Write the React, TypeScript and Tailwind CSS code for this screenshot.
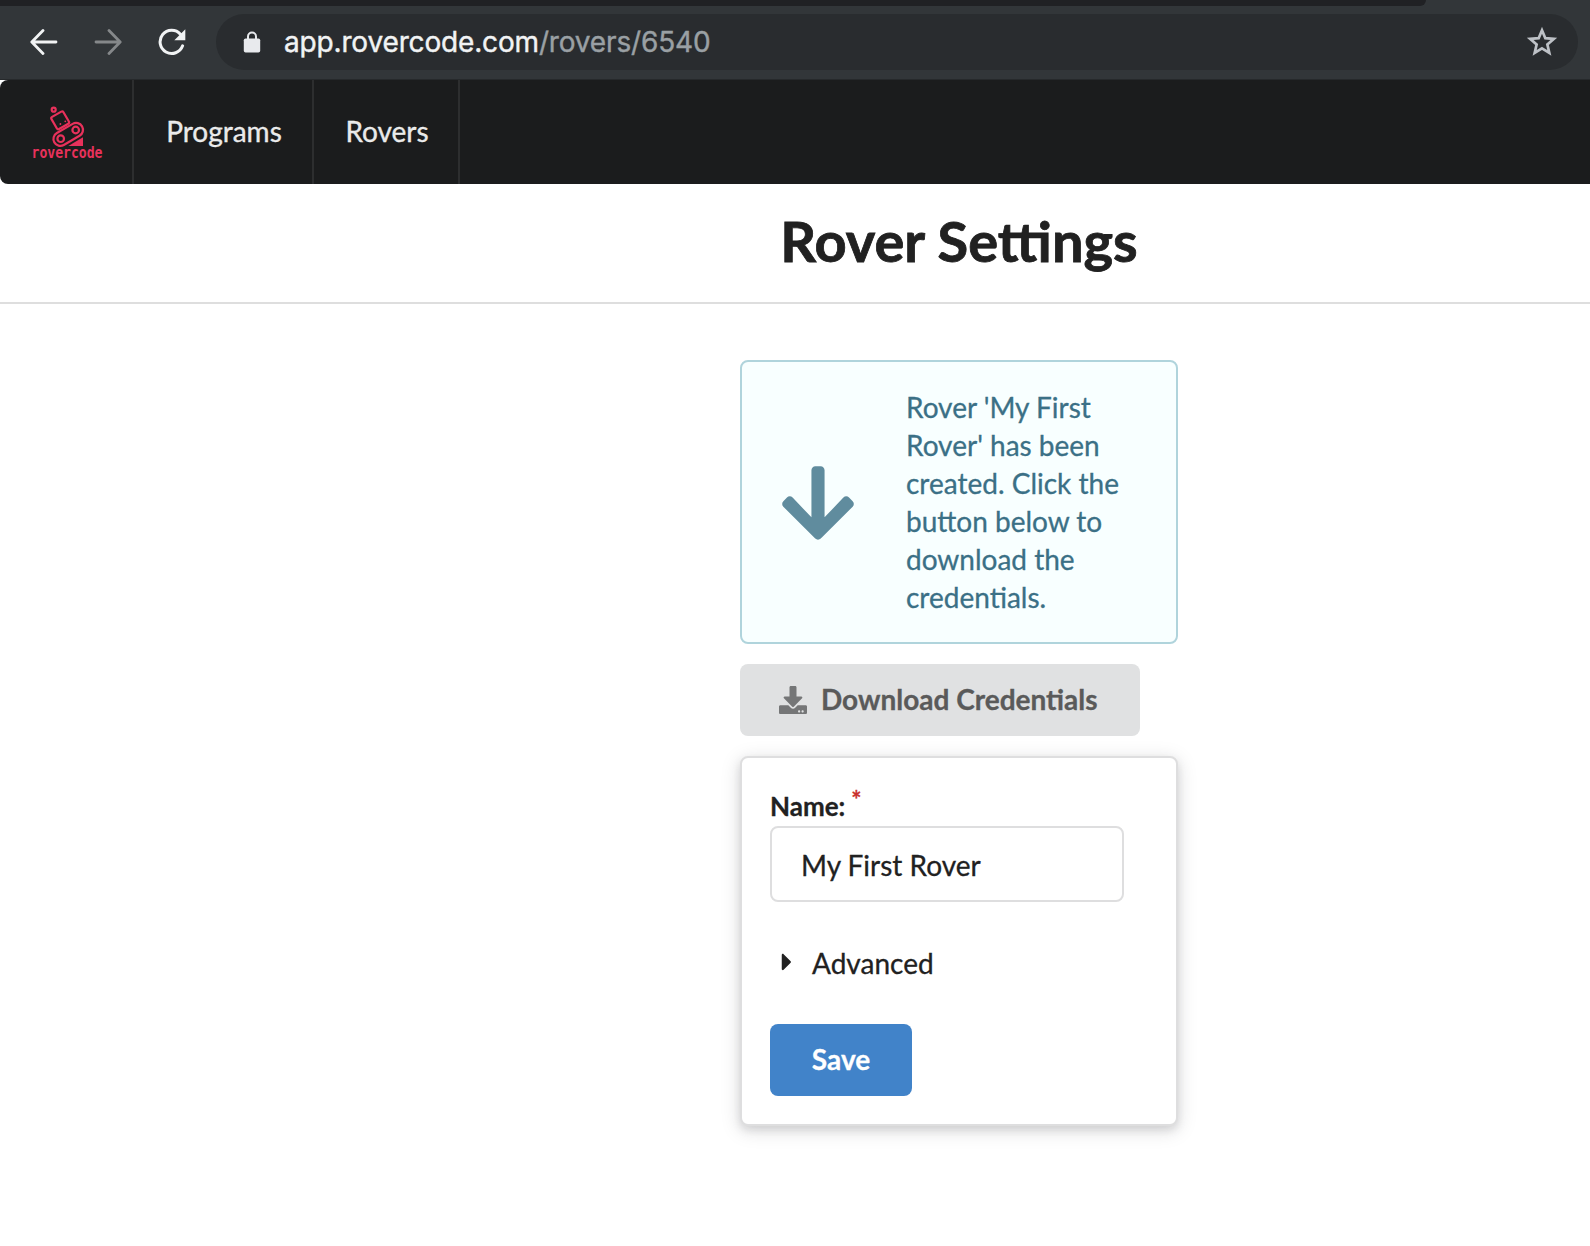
import { FaArrowDown, FaCaretRight, FaDownload } from "react-icons/fa";

function BackArrow({ className }: { className: string }) {
  return (
    <svg className={className} viewBox="0 0 28 28" fill="none" stroke="currentColor" strokeWidth="2.8" strokeLinecap="round" strokeLinejoin="round">
      <path d="M26 14H2.5M13 2.5 1.8 14 13 25.5" />
    </svg>
  );
}

function Reload() {
  return (
    <svg className="ml-[36px] size-7 text-[#f1f3f4]" viewBox="0 0 28 28" fill="none">
      <path d="M22.4 6.2A11.6 11.6 0 1 0 24.6 17.8" stroke="currentColor" strokeWidth="3" strokeLinecap="round" />
      <path d="M27.3 1.3V12.3H16.3Z" fill="currentColor" />
    </svg>
  );
}

function Lock() {
  return (
    <svg className="h-[22px] w-[18px] text-[#e8eaed]" viewBox="0 0 18 22" fill="none">
      <path d="M5 9V5.6a4 4 0 0 1 8 0V9" stroke="currentColor" strokeWidth="2" />
      <rect x="0.8" y="7.5" width="16.4" height="14" rx="1.8" fill="currentColor" />
    </svg>
  );
}

function Star() {
  return (
    <svg className="size-9 text-[#bdc1c6]" viewBox="0 0 24 24" fill="none">
      <path
        d="M12 17.27 18.18 21 16.54 13.97 22 9.24 14.81 8.63 12 2 9.19 8.63 2 9.24 7.46 13.97 5.82 21Z"
        transform="translate(12 12.5) scale(0.79) translate(-12 -12.5)"
        stroke="currentColor"
        strokeWidth="2.3"
      />
    </svg>
  );
}

function RoverLogo() {
  return (
    <svg className="h-[64px] w-[82px]" viewBox="25 100 82 64" fill="none" stroke="#e8315b" strokeWidth="2.2">
      <circle cx="53.7" cy="109.7" r="2" />
      <rect x="53.2" y="113.4" width="13.8" height="14" rx="1.6" transform="rotate(-30 60 120.2)" />
      <circle cx="60.4" cy="124" r="0.9" fill="#e8315b" stroke="none" />
      <circle cx="65.3" cy="121.3" r="0.9" fill="#e8315b" stroke="none" />
      <rect x="52.2" y="127.5" width="32" height="13.8" rx="6.9" transform="rotate(-30 68.2 134.4)" />
      <circle cx="60.7" cy="138.7" r="3.3" />
      <circle cx="75.7" cy="130" r="3.3" />
      <path d="M68.3 146 83 137.3V146Z" fill="#e8315b" stroke="none" />
      <text x="31.5" y="157.8" textLength="71" lengthAdjust="spacingAndGlyphs" fill="#e8315b" stroke="none" className="font-['DejaVu_Sans_Mono',monospace] text-[15.5px] font-bold">
        rovercode
      </text>
    </svg>
  );
}

function BrowserBar() {
  return (
    <div className="h-20 border-b border-[#26292b] bg-[#323639]">
      <div className="h-1.5 w-[1426px] rounded-br-[14px] bg-[#202124]" />
      <div className="flex h-[71.5px] items-center pl-[30px] pr-3">
        <BackArrow className="size-7 text-[#f1f3f4]" />
        <BackArrow className="ml-[36px] size-7 rotate-180 text-[#85888a]" />
        <Reload />
        <div className="ml-[30px] flex h-14 flex-1 items-center rounded-full bg-[#292c2f] pl-[27px] pr-[18px]">
          <Lock />
          <div className="ml-[23px] flex-1 pt-px font-['Inter',sans-serif] text-[28px] leading-none tracking-[-0.16px] text-[#9aa0a4] [-webkit-text-stroke:0.4px]">
            <span className="text-[#f1f3f4]">app.rovercode.com</span>/rovers/6540
          </div>
          <Star />
        </div>
      </div>
    </div>
  );
}

function NavBar() {
  return (
    <div className="bg-white">
      <nav className="flex h-[104px] rounded-l-lg bg-[#1b1c1d] text-[28px] text-white/90">
        <div className="flex w-[134px] items-center justify-center border-r-2 border-[#2d2e2f]">
          <RoverLogo />
        </div>
        <div className="flex w-[180px] items-center justify-center border-r-2 border-[#2d2e2f] pb-0.5 pl-0.5">Programs</div>
        <div className="flex w-[146px] items-center justify-center border-r-2 border-[#2d2e2f] pb-0.5 pl-0.5">Rovers</div>
      </nav>
    </div>
  );
}

export default function App() {
  return (
    <div className="h-[1246px] overflow-hidden bg-white font-['Lato',sans-serif] text-[28px] text-[#212121] [-webkit-text-stroke:0.3px]">
      <BrowserBar />
      <NavBar />
      <header className="flex h-[120px] border-b-2 border-[#dedede] pl-[740px]">
        <h1 className="mt-[21px] w-[438px] text-center text-[56px] font-bold leading-[72px] [-webkit-text-stroke:0.8px]">Rover Settings</h1>
      </header>
      <main className="ml-[740px] mt-14 w-[438px]">
        <div className="flex h-[284px] items-center rounded-lg border-2 border-[#b0d4dc] bg-[#f8ffff] pl-[34px] text-[#3b7086]">
          <FaArrowDown className="mt-px size-[84px] opacity-80" />
          <p className="ml-[46px] w-[226px] leading-[38px]">
            Rover 'My First Rover' has been created. Click the button below to download the credentials.
          </p>
        </div>
        <button className="mt-5 flex h-[72px] w-[400px] items-center rounded-lg bg-[#e0e1e2] pb-0.5 pl-[38.5px] font-bold text-[#5a5a5a]">
          <FaDownload className="mt-0.5 size-7 text-[#757677]" />
          <span className="ml-[14.5px]">Download Credentials</span>
        </button>
        <div className="mt-5 h-[370px] rounded-lg border-2 border-[#dededf] bg-white pl-7 pt-7 shadow-[0_4px_8px_0_rgba(34,36,38,0.12),0_4px_20px_0_rgba(34,36,38,0.15)]">
          <label className="flex h-10 items-start text-[26px] font-bold leading-10">
            Name:
            <span className="ml-[6px] mt-[-6px] text-[24px] text-[#c9302c]">*</span>
          </label>
          <div className="flex h-[76px] w-[354px] items-center rounded-lg border-2 border-[#dededf] pl-[29px]">
            <span className="mt-[2px]">My First Rover</span>
          </div>
          <div className="mt-[41px] flex h-10 items-center">
            <FaCaretRight className="mb-[3px] ml-[3px] size-7" />
            <span className="ml-[11px] leading-10">Advanced</span>
          </div>
          <button className="mt-[41px] h-[72px] w-[142px] rounded-lg bg-[#4183c9] pb-0.5 font-bold text-white">Save</button>
        </div>
      </main>
    </div>
  );
}
